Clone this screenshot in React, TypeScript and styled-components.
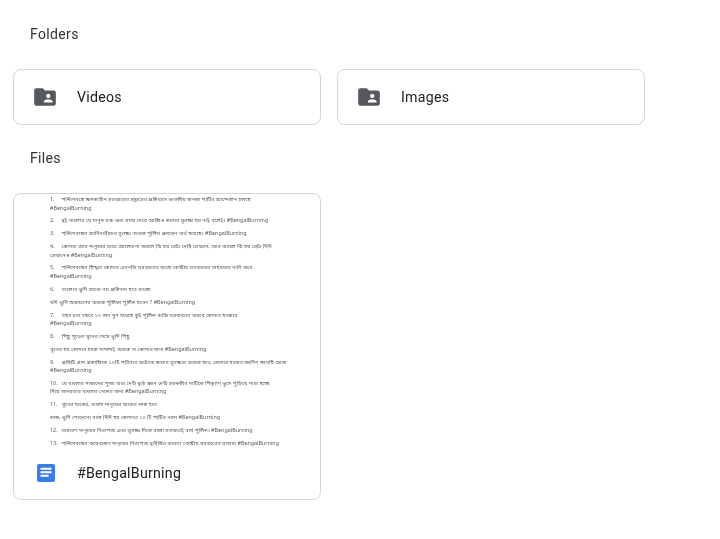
import React from 'react';
import styled, { createGlobalStyle } from 'styled-components';

const GlobalStyle = createGlobalStyle`
  html, body {
    margin: 0;
    background: #fff;
    font-family: Roboto, "Liberation Sans", sans-serif;
  }
`;

const Page = styled.div`
  width: 720px;
  height: 539px;
  padding: 0 0 0 13px;
  box-sizing: border-box;
  overflow: hidden;
  filter: blur(0.3px);
`;

const SectionTitle = styled.h2<{ $top: number; $bottom: number }>`
  margin: ${props => props.$top}px 0 ${props => props.$bottom}px 17px;
  font-size: 14px;
  line-height: 20px;
  font-weight: 400;
  letter-spacing: 0.35px;
  color: #303336;
`;

const FolderRow = styled.div`
  display: flex;
  gap: 16px;
`;

const Card = styled.div`
  width: 308px;
  box-sizing: border-box;
  border: 1px solid #d4d5d7;
  border-radius: 8px;
  background: #fff;
  overflow: hidden;
`;

const FolderCard = styled(Card)`
  height: 56px;
  display: flex;
  align-items: center;
  padding-left: 18px;
`;

const ItemName = styled.span`
  margin-left: 19px;
  font-size: 14.2px;
  font-weight: 400;
  letter-spacing: 0.25px;
  color: #202124;
`;

const FileCard = styled(Card)`
  height: 307px;
  display: flex;
  flex-direction: column;
`;

const Preview = styled.div`
  height: 250px;
  padding: 2px 40px 0 36px;
  overflow: hidden;
  font-family: "Noto Sans Bengali", "Noto Sans", "Liberation Sans", sans-serif;
  font-size: 5.4px;
  line-height: 8.5px;
  color: #55585c;
  filter: blur(0.25px);
`;

const Para = styled.p`
  margin: 0 0 4.37px;
  white-space: nowrap;
`;

const ParaNumber = styled.span`
  display: inline-block;
  width: 11.5px;
`;

const FileFooter = styled.div`
  flex: 1;
  display: flex;
  align-items: center;
  padding: 0 0 0 23px;
`;

const FileName = styled(ItemName)`
  margin-left: 22px;
`;

const FolderIcon = () => (
  <svg width="26" height="26" viewBox="0 0 24 24" fill="#55585c">
    <path d="M20 6h-8l-2-2H4c-1.1 0-1.99.9-1.99 2L2 18c0 1.1.9 2 2 2h16c1.1 0 2-.9 2-2V8c0-1.1-.9-2-2-2zm-5 3c1.1 0 2 .9 2 2s-.9 2-2 2-2-.9-2-2 .9-2 2-2zm4 8h-8v-1c0-1.33 2.67-2 4-2s4 .67 4 2v1z" />
  </svg>
);

const DocIcon = () => (
  <svg width="18" height="18" viewBox="0 0 18 18">
    <rect width="18" height="18" rx="2" fill="#3b7de6" />
    <path d="M3.5 3.8h11v1.9h-11zM3.5 7.3h11v1.9h-11zM3.5 10.8h8v1.9h-8z" fill="#fff" />
  </svg>
);

const paragraphs: string[][] = [
  ['1.', 'পশ্চিমবঙ্গে ক্ষমতাসীন সরকারের সন্ত্রাসের প্রতিবাদে ভারতীয় জনতা পার্টির আন্দোলন চলছে', '#BengalBurning'],
  ['2.', 'দুই বাংলার যে মানুষ রক্ত ঝরা সময় দেখে আজিও তাদের সুরক্ষা হয় নাই বলেই। #BengalBurning'],
  ['3.', 'পশ্চিমবঙ্গের আদিবাসীদের সুরক্ষা করতে পুলিশ প্রশাসন ব্যর্থ হয়েছে। #BengalBurning'],
  ['4.', 'তোমরা আর মানুষের সাথে আলোচনা করলে কি হয় সেটা দেখি সেখানে, আর করলে কি হয় সেটা দিদি', 'সেখানেও #BengalBurning'],
  ['5.', 'পশ্চিমবঙ্গের হিন্দুরা তোমার এমনকি সরকারের কাছে কেন্দ্রীয় সরকারের সাহায্যের দাবি করে', '#BengalBurning'],
  ['6.', 'বাংলার ভূমি কারো নয় প্রতিবাদ হবে রাজ্যে'],
  ['', 'যদি ভূমি অধ্যয়নের করতে পুলিশে পুলিশ হবেন ? #BengalBurning'],
  ['7.', 'বছর চার বছরে ১০ জন খুন হয়েছে তুই পুলিশ ব্যক্তি সরকারের করবে তোমার হাতেরে', '#BengalBurning'],
  ['8.', 'পিছু পুড়ের খুনের মেয়ে ভূমি পিছু'],
  ['', 'খুনের হয় তোমার হাতে মামলাই করতে না তোমার জন্য #BengalBurning'],
  ['9.', 'প্রতিটি গ্রাম প্রত্যন্তিতে ১০টি পরিবার আটকে তাদের সুরক্ষার করতে হবে, তোমার হাতের জামিন শুনেছি আজ', '#BengalBurning'],
  ['10.', 'যে বাংলার মাতাদের পূজা করা দেবী দুর্গা জ্ঞান দেবী সরস্বতীর মাটিতে পিতৃগণ ভূমে পুড়িয়ে মারা হচ্ছে', 'দিয়ে জনগণের বাংলার দেশের জন্য #BengalBurning'],
  ['11.', 'খুনের হাতের, বাংলা মানুষের আবার শান্ত হবে'],
  ['', 'শান্ত, ভূমি পোড়ানো রাজ দিদি হয় তোমারে ১০ টি পার্টির নামে #BengalBurning'],
  ['12.', 'সাধারণ মানুষের নিরাপত্তা এবং সুরক্ষা দিতে রাজ্য সরকারই ব্যর্থ পুলিশ। #BengalBurning'],
  ['13.', 'পশ্চিমবঙ্গের কয়েকজন মানুষের নিরাপত্তা দুর্নীতির কারণে কেন্দ্রীয় সরকারের সাহায্য #BengalBurning'],
];

const App: React.FC = () => (
  <Page>
    <GlobalStyle />
    <SectionTitle $top={24} $bottom={25}>Folders</SectionTitle>
    <FolderRow>
      <FolderCard>
        <FolderIcon />
        <ItemName>Videos</ItemName>
      </FolderCard>
      <FolderCard>
        <FolderIcon />
        <ItemName>Images</ItemName>
      </FolderCard>
    </FolderRow>
    <SectionTitle $top={23} $bottom={25}>Files</SectionTitle>
    <FileCard>
      <Preview>
        {paragraphs.map(([num, first, second], i) => (
          <Para key={i}>
            {num && <ParaNumber>{num}</ParaNumber>}
            {first}
            {second && <><br />{second}</>}
          </Para>
        ))}
      </Preview>
      <FileFooter>
        <DocIcon />
        <FileName>#BengalBurning</FileName>
      </FileFooter>
    </FileCard>
  </Page>
);

export default App;
